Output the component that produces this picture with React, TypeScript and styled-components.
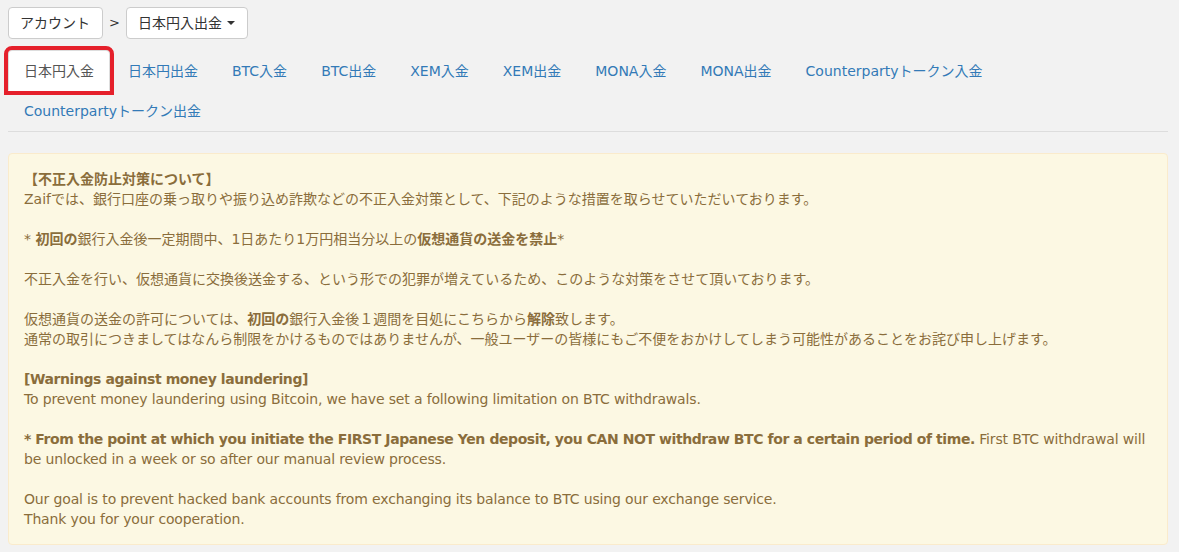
import React from 'react';
import styled, { createGlobalStyle } from 'styled-components';

const GlobalStyle = createGlobalStyle`
    html, body {
        margin: 0;
        padding: 0;
        background: #f2f2f2;
    }
    body {
        font-family: "DejaVu Sans", "Noto Sans CJK JP", sans-serif;
        font-size: 14px;
        line-height: 20px;
        color: #333;
    }
`;

const Page = styled.div`
    padding: 7px 11px 8px 8px;
`;

const Breadcrumb = styled.div`
    display: flex;
    align-items: center;
    gap: 6px;
`;

const CrumbButton = styled.button`
    display: inline-flex;
    align-items: center;
    gap: 5px;
    height: 32px;
    padding: 0 12px 0 11px;
    background: #fff;
    border: 1px solid #ccc;
    border-radius: 4px;
    font: inherit;
    color: #333;
    cursor: pointer;
`;

const Caret = styled.span`
    width: 0;
    height: 0;
    border-top: 4px solid #333;
    border-left: 4px solid transparent;
    border-right: 4px solid transparent;
`;

const Sep = styled.span`
    color: #333;
    font-size: 13px;
`;

const Tabs = styled.ul`
    display: flex;
    flex-wrap: wrap;
    list-style: none;
    margin: 11px 0 0;
    padding: 0 0 1px;
    border-bottom: 1px solid #ddd;
`;

const Tab = styled.li<{ active?: boolean }>`
    margin: 0 2px -1px 0;
    a {
        display: block;
        padding: 10px 15px 9px;
        border: 1px solid ${({ active }) => active ? '#ddd' : 'transparent'};
        border-bottom-color: transparent;
        border-radius: 4px 4px 0 0;
        background: ${({ active }) => active ? '#fff' : 'transparent'};
        color: ${({ active }) => active ? '#555' : '#337ab7'};
        text-decoration: none;
        outline: ${({ active }) => active ? '4px solid #e5202b' : 'none'};
    }
`;

const Alert = styled.div`
    margin-top: 21px;
    padding: 15px;
    background: #fcf8e3;
    border: 1px solid #faebcc;
    border-radius: 4px;
    color: #8a6d3b;
`;

// English paragraphs are tightened a little to match the original's Tahoma widths
const Para = styled.p<{ en?: boolean }>`
    margin: 0 0 20px;
    letter-spacing: ${({ en }) => en ? '-0.15px' : 'normal'};

    b {
        letter-spacing: ${({ en }) => en ? '-0.42px' : 'normal'};
    }

    &:last-child {
        margin-bottom: 0;
    }
`;

const tabs = [
    '日本円入金', '日本円出金', 'BTC入金', 'BTC出金', 'XEM入金', 'XEM出金',
    'MONA入金', 'MONA出金', 'Counterpartyトークン入金', 'Counterpartyトークン出金',
];

const App = () => (
    <>
        <GlobalStyle />
        <Page>
            <Breadcrumb>
                <CrumbButton>アカウント</CrumbButton>
                <Sep>&gt;</Sep>
                <CrumbButton>日本円入出金<Caret /></CrumbButton>
            </Breadcrumb>
            <Tabs>
                {tabs.map((t, i) => (
                    <Tab key={t} active={i === 0}><a href="#">{t}</a></Tab>
                ))}
            </Tabs>
            <Alert>
                <Para>
                    <b>【不正入金防止対策について】</b><br />
                    Zaifでは、銀行口座の乗っ取りや振り込め詐欺などの不正入金対策として、下記のような措置を取らせていただいております。
                </Para>
                <Para>* <b>初回の</b>銀行入金後一定期間中、1日あたり1万円相当分以上の<b>仮想通貨の送金を禁止</b>*</Para>
                <Para>不正入金を行い、仮想通貨に交換後送金する、という形での犯罪が増えているため、このような対策をさせて頂いております。</Para>
                <Para>
                    仮想通貨の送金の許可については、<b>初回の</b>銀行入金後１週間を目処にこちらから<b>解除</b>致します。<br />
                    通常の取引につきましてはなんら制限をかけるものではありませんが、一般ユーザーの皆様にもご不便をおかけしてしまう可能性があることをお詫び申し上げます。
                </Para>
                <Para en>
                    <b>[Warnings against money laundering]</b><br />
                    To prevent money laundering using Bitcoin, we have set a following limitation on BTC withdrawals.
                </Para>
                <Para en>
                    <b>* From the point at which you initiate the FIRST Japanese Yen deposit, you CAN NOT withdraw BTC for a certain period of time.</b> First BTC withdrawal will be unlocked in a week or so after our manual review process.
                </Para>
                <Para en>
                    Our goal is to prevent hacked bank accounts from exchanging its balance to BTC using our exchange service.<br />
                    Thank you for your cooperation.
                </Para>
            </Alert>
        </Page>
    </>
);

export default App;
